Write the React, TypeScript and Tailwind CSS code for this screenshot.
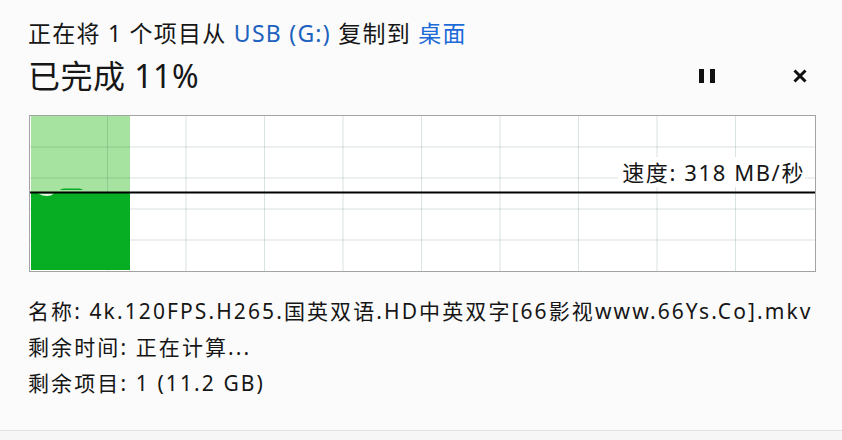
import React from 'react';

const COLS = 10;
const ROWS = 5;
const W = 785;
const H = 155;

const details = [
  { label: '名称', value: '4k.120FPS.H265.国英双语.HD中英双字[66影视www.66Ys.Co].mkv' },
  { label: '剩余时间', value: '正在计算...' },
  { label: '剩余项目', value: '1 (11.2 GB)' },
];

function SpeedChart() {
  const colW = W / COLS;
  const rowH = H / ROWS;
  const lineY = 76.5;
  const progressX = 100;

  return (
    <svg width={W} height={H} viewBox={`0 0 ${W} ${H}`} className="block">
      {/* area above the speed line */}
      <rect x={1} y={0} width={progressX - 1} height={lineY} fill="#a6e3a0" />
      {/* grid */}
      {Array.from({ length: COLS - 1 }, (_, i) => (
        <line
          key={`v${i}`}
          x1={colW * (i + 1) - 1}
          x2={colW * (i + 1) - 1}
          y1={0}
          y2={H}
          stroke="rgba(0,70,45,0.15)"
          strokeWidth={1}
        />
      ))}
      {Array.from({ length: ROWS - 1 }, (_, i) => (
        <line
          key={`h${i}`}
          x1={0}
          x2={W}
          y1={rowH * (i + 1)}
          y2={rowH * (i + 1)}
          stroke="rgba(0,70,45,0.15)"
          strokeWidth={1}
        />
      ))}
      {/* transferred data */}
      <rect x={1} y={lineY + 0.5} width={progressX - 1} height={H - lineY - 1.5} fill="#07ad23" />
      <path d="M30 74 Q31 72.5 34 72.5 L49 72.5 Q52 72.5 53 74 Z" fill="#07ad23" />
      <path d="M8 77.5 L24 77.5 Q21 80 17 80 Q13 80 8 77.5 Z" fill="#e8f6e6" />
      {/* current speed */}
      <line x1={0} x2={W} y1={lineY} y2={lineY} stroke="#000" strokeWidth={2} />
    </svg>
  );
}

export default function App() {
  return (
    <div
      className="w-[842px] h-[440px] bg-[#fbfbfb] text-[#161616] flex flex-col overflow-hidden"
      style={{ fontFamily: '"Noto Sans", "Noto Sans CJK SC", sans-serif' }}
    >
      <div className="flex-1 px-[28px] pt-[18px]">
        <div className="text-[23px] leading-[30px] tracking-[1.25px] whitespace-nowrap">
          正在将 1 个项目从 <span className="text-[#1d62be]">USB (G:)</span> 复制到{' '}
          <span className="text-[#1a6ad8]">桌面</span>
        </div>

        <div className="mt-[8px] flex items-center h-[40px]">
          <div className="text-[32px] leading-[40px] tracking-[0.5px] flex-1">已完成 11%</div>
          <button className="w-[16px] h-[14px] flex justify-between mr-[77px]" aria-label="暂停">
            <span className="block w-[5px] h-full bg-[#111]" />
            <span className="block w-[5px] h-full bg-[#111]" />
          </button>
          <button className="w-[16px] h-[16px] mr-[6px]" aria-label="取消">
            <svg viewBox="0 0 16 16" width={16} height={16}>
              <path d="M2.5 2.5 L13.5 13.5 M13.5 2.5 L2.5 13.5" stroke="#111" strokeWidth={3} />
            </svg>
          </button>
        </div>

        <div className="relative mt-[19px] ml-px w-[787px] border border-[#a3a3a3] bg-white">
          <SpeedChart />
          <div className="absolute right-[10px] top-[41px] text-[22px] leading-[30px] tracking-[1.6px] bg-white pl-1 whitespace-nowrap">
            速度: 318 MB/秒
          </div>
        </div>

        <div className="mt-[21px] text-[21px] leading-[36px] tracking-[2.1px]">
          {details.map((d) => (
            <div key={d.label} className="whitespace-nowrap">
              {d.label}: {d.value}
            </div>
          ))}
        </div>
      </div>
      <div className="h-[10px] border-t border-[#e2e2e2] bg-[#f6f6f6]" />
    </div>
  );
}
